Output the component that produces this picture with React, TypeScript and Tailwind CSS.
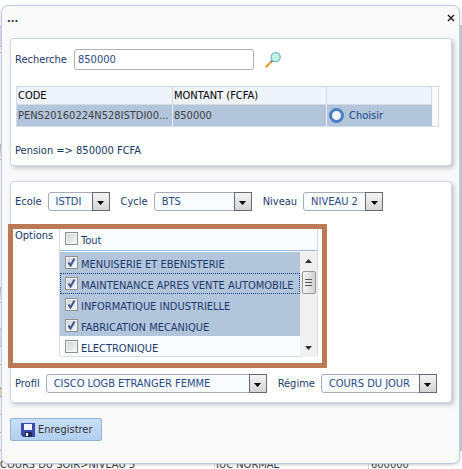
import React from "react";

const base = "text-[11px] leading-[16px] text-[#1b3a6b]";

function Panel({ children, className = "" }: { children: React.ReactNode; className?: string }) {
  return (
    <section className={"rounded-[4px] border border-[#cfd9e2] bg-white px-[4px] shadow-[2px_2px_4px_rgba(120,130,140,0.45)] " + className}>
      {children}
    </section>
  );
}

function Combo({ id, label, value, width }: { id: string; label: string; value: string; width: string }) {
  return (
    <div className="flex items-center gap-[6px]">
      <label htmlFor={id}>{label}</label>
      <div className={"relative h-[19px] " + width}>
        <select
          id={id}
          defaultValue={value}
          className="block h-full w-full appearance-none rounded-[3px] border border-[#a9adb3] bg-[#f8fcff] pl-[7px] text-[11px] leading-[16px] text-[#2b4a86] outline-none"
        >
          <option>{value}</option>
        </select>
        <span className="pointer-events-none absolute inset-y-0 right-0 flex w-[18px] items-center justify-center border border-[#666a70] bg-linear-to-b from-[#f4f4f4] to-[#d4d4d4]">
          <svg width="7" height="4" viewBox="0 0 7 4" className="mt-[2px]" aria-hidden="true">
            <path d="M0 0h7L3.5 4z" fill="#000" />
          </svg>
        </span>
      </div>
    </div>
  );
}

function Tick({ id, label, checked = false }: { id: string; label: string; checked?: boolean }) {
  return (
    <div className="flex h-full items-start gap-[3px] pl-[5px] pt-[4px]">
      <span className="relative block h-[13px] w-[13px]">
        <input
          id={id}
          type="checkbox"
          defaultChecked={checked}
          className="peer block h-[13px] w-[13px] appearance-none border border-[#8e8f8f] bg-linear-to-br from-[#cfd2d8] to-[#f8f8f8] shadow-[inset_0_0_0_1px_#f4f4f4]"
        />
        <svg viewBox="0 0 13 13" className="pointer-events-none absolute inset-0 hidden h-[13px] w-[13px] peer-checked:block" aria-hidden="true">
          <path d="M3.5 6.5 5.5 9.5 9.5 2.5" fill="none" stroke="#3f5590" strokeWidth="2" />
        </svg>
      </span>
      <label htmlFor={id} className="whitespace-nowrap pt-[1px]">
        {label}
      </label>
    </div>
  );
}

const options = [
  { label: "MENUISERIE ET EBENISTERIE", on: true },
  { label: "MAINTENANCE APRES VENTE AUTOMOBILE", on: true, focus: true },
  { label: "INFORMATIQUE INDUSTRIELLE", on: true },
  { label: "FABRICATION MECANIQUE", on: true },
  { label: "ELECTRONIQUE", on: false },
];

const backdropRows = [
  "h-[26px] bg-white",
  "h-[21px] border-y border-[#b9c8d8] bg-[#dbe4ee]",
  "h-[6px] border-b border-[#c3cedb]",
  "h-[91px]",
  "h-[16px] border-b border-[#c3cedb] bg-linear-to-b from-[#b8b8bc] to-transparent",
  "h-[127px]",
  "h-[16px] border-b border-[#c3cedb] bg-linear-to-b from-[#b8b8bc] to-transparent",
  "h-[26px] border-b border-[#c3cedb]",
  "h-[18px] border-b border-[#c3cedb] bg-[#dfe4f0]",
  "h-[18px] border-b border-[#c3cedb]",
  "h-[23px] border-b border-[#c3cedb]",
  "h-[9px] border-y border-[#b08a4a] bg-[#f6dc9a]",
  "h-[18px] border-b border-[#c3cedb]",
  "h-[18px] border-b border-[#c3cedb]",
  "h-[18px] border-b border-[#c3cedb]",
];

export default function App() {
  return (
    <main className={"relative h-screen overflow-hidden bg-white font-['DejaVu_Sans_Condensed','DejaVu_Sans',sans-serif] " + base}>
      <div className="absolute inset-0 flex flex-col justify-between">
        <div className="flex">
          <div className="flex-1">
            {backdropRows.map((row, i) => (
              <div key={i} className={row} />
            ))}
          </div>
          <div className="mt-[25px] w-[3px] bg-[#c8cdd9]" />
        </div>
        <div className="grid h-[11px] grid-cols-[214px_154px_1fr] text-[#333333]">
          <span className="leading-[14px]">COURS DU SOIR&gt;NIVEAU 5</span>
          <span className="border-l border-[#d5dbe3] pl-[1px] leading-[14px]">IUC NORMAL</span>
          <span className="border-l border-[#d5dbe3] pl-[2px] leading-[14px]">600000</span>
        </div>
      </div>

      <div role="dialog" aria-label="..." className="relative ml-[1px] mr-[2px] mt-[5px] rounded-[7px] border border-[#bfcbe0] bg-[#f9f9f9] pb-[22px] pl-[8px] pr-[7px] shadow-[0_1px_3px_rgba(120,130,140,0.4)]">
        <header className="flex h-[32px] items-start justify-between">
          <h1 className="-ml-[3px] pt-[5px] font-bold text-[#1b3a5b]">...</h1>
          <button type="button" aria-label="Fermer" className="-mr-[3px] pt-[8px]">
            <svg width="8" height="8" viewBox="0 0 8 8" aria-hidden="true">
              <path d="M1 1 7 7M7 1 1 7" stroke="#222" strokeWidth="1.5" />
            </svg>
          </button>
        </header>

        <Panel className="pb-[6px] pt-[10px]">
          <div className="flex items-center">
            <label htmlFor="recherche" className="w-[59px]">Recherche</label>
            <input id="recherche" defaultValue="850000" className="h-[21px] w-[180px] rounded-[3px] border border-[#b0b0b0] bg-white pl-[3px] text-[11px] text-[#2b4a86] outline-none" />
            <button type="button" aria-label="Rechercher" className="ml-[11px]">
              <svg width="16" height="16" viewBox="0 0 16 16" aria-hidden="true">
                <path d="M0.8 15.2 7 9" stroke="#f0a23c" strokeWidth="2.4" />
                <path d="M6 10 7.6 8.4" stroke="#6d7f9c" strokeWidth="2" />
                <circle cx="10.7" cy="5.2" r="4.5" fill="#bff7e2" stroke="#79b3cc" strokeWidth="1.3" />
              </svg>
            </button>
          </div>
          <div className="ml-[1px] mr-[8px] mt-[16px]">
            <table className="w-full table-fixed border-collapse border border-[#d3dbe3]">
              <colgroup>
                <col className="w-[156px]" />
                <col className="w-[154px]" />
                <col />
                <col className="w-[7px]" />
              </colgroup>
              <thead>
                <tr className="h-[18px] bg-[#eff3fa] text-left text-black">
                  <th className="border border-[#d3dbe3] pl-[1px] font-normal">CODE</th>
                  <th className="border border-[#d3dbe3] pl-[1px] font-normal">MONTANT (FCFA)</th>
                  <th className="border border-[#d3dbe3]" aria-label="Choix" />
                  <th className="border-l border-[#d3dbe3] bg-[#f9fbfd]" aria-label="Fin" />
                </tr>
              </thead>
              <tbody>
                <tr className="h-[22px] bg-[#b3c5db] text-[#3f3f3f]">
                  <td className="whitespace-nowrap border-r border-[#e6edf4] pl-[1px]">PENS20160224N528ISTDI00...</td>
                  <td className="border-r border-[#e6edf4] pl-[1px]">850000</td>
                  <td className="pl-[2px]">
                    <label className="flex items-center gap-[5px] text-[#15428b]">
                      <input type="radio" name="choix" className="h-[15px] w-[15px] appearance-none rounded-full border-[3px] border-[#4a80c4] bg-[#f3f3f3]" />
                      Choisir
                    </label>
                  </td>
                  <td className="bg-[#f9fbfd]" />
                </tr>
              </tbody>
            </table>
          </div>
          <p className="mt-[16px] text-[#15385f]">Pension =&gt; 850000 FCFA</p>
        </Panel>

        <Panel className="mt-[15px] pb-[9px] pt-[10px]">
          <div className="flex items-center gap-[11px]">
            <Combo id="ecole" label="Ecole" value="ISTDI" width="w-[62px]" />
            <Combo id="cycle" label="Cycle" value="BTS" width="w-[98px]" />
            <Combo id="niveau" label="Niveau" value="NIVEAU 2" width="w-[80px]" />
          </div>

          <div className="relative mt-[13px] flex h-[144px] w-[312px] pt-[4px]">
            <span id="options-label" className="w-[44px] shrink-0 text-[#15385f]">Options</span>
            <div role="group" aria-labelledby="options-label" className="h-[129px] w-[259px] rounded-b-[3px] border border-t-0 border-[#d5dde4] bg-[#f9fdff]">
              <div className="mb-[1px] h-[23px] border-b border-[#9bbadb]">
                <Tick id="tout" label="Tout" />
              </div>
              <div className="flex h-[105px]">
                <ul className="flex-1">
                  {options.map((o, i) => (
                    <li key={o.label} className={"h-[21px] " + (o.on ? "bg-[#b3c5db] " : "") + (o.focus ? "outline-1 -outline-offset-1 outline-dotted outline-[#15428b]" : "")}>
                      <Tick id={"option" + i} label={o.label} checked={o.on} />
                    </li>
                  ))}
                </ul>
                <div className="flex w-[17px] flex-col items-center justify-between bg-[#f0f0f0] py-[7px]" aria-hidden="true">
                  <div className="flex flex-col items-center gap-[8px]">
                    <svg width="7" height="4" viewBox="0 0 7 4"><path d="M0 4h7L3.5 0z" fill="#333" /></svg>
                    <span className="flex h-[23px] w-[14px] flex-col items-center justify-center gap-[2px] rounded-[2px] border border-[#979797] bg-linear-to-r from-[#f6f6f6] to-[#d0d0d3]">
                      <span className="h-px w-[7px] bg-[#555]" />
                      <span className="h-px w-[7px] bg-[#555]" />
                      <span className="h-px w-[7px] bg-[#555]" />
                    </span>
                  </div>
                  <svg width="7" height="4" viewBox="0 0 7 4"><path d="M0 0h7L3.5 4z" fill="#333" /></svg>
                </div>
              </div>
            </div>
            <div className="pointer-events-none absolute inset-y-0 -left-[7px] w-[319px] border-[5px] border-[#bb7956]" />
          </div>

          <div className="mt-[6px] flex items-center gap-[11px]">
            <Combo id="profil" label="Profil" value="CISCO LOGB ETRANGER FEMME" width="w-[221px]" />
            <Combo id="regime" label="Régime" value="COURS DU JOUR" width="w-[116px]" />
          </div>
        </Panel>

        <button type="button" className="mt-[15px] flex h-[23px] w-[92px] items-center gap-[3px] rounded-[2px] border border-[#8fb4da] bg-linear-to-b from-[#c9dff5] to-[#b0d0f0] pl-[10px] text-[#333333]">
          <svg width="14" height="14" viewBox="0 0 14 14" aria-hidden="true">
            <path d="M0 0h14v14H2L0 12z" fill="#3d49a8" />
            <path d="M3 1h8v6H3z" fill="#eef3ff" />
            <path d="M4 9h7v5H4z" fill="#222a55" />
            <path d="M5 10h2v3H5z" fill="#fff" />
          </svg>
          Enregistrer
        </button>
      </div>
    </main>
  );
}
